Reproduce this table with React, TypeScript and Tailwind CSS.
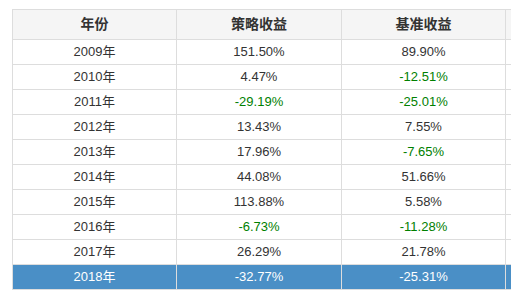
const rows: [string, string, string][] = [
  ['2009年', '151.50%', '89.90%'],
  ['2010年', '4.47%', '-12.51%'],
  ['2011年', '-29.19%', '-25.01%'],
  ['2012年', '13.43%', '7.55%'],
  ['2013年', '17.96%', '-7.65%'],
  ['2014年', '44.08%', '51.66%'],
  ['2015年', '113.88%', '5.58%'],
  ['2016年', '-6.73%', '-11.28%'],
  ['2017年', '26.29%', '21.78%'],
  ['2018年', '-32.77%', '-25.31%'],
];

function Val({ v, hi }: { v: string; hi: boolean }) {
  const neg = v.startsWith('-');
  return <span className={hi ? 'text-white' : neg ? 'text-[#008000]' : 'text-[#333]'}>{v}</span>;
}

export default function App() {
  return (
    <div className="h-[294px] w-[511px] overflow-hidden bg-white pl-3 pt-[9px] font-['Liberation_Sans',Arial,'Noto_Sans_CJK_SC',sans-serif] text-[13px] text-[#333]">
      <table className="w-[600px] table-fixed border-collapse">
        <colgroup>
          <col className="w-[164px]" />
          <col className="w-[165px]" />
          <col className="w-[164px]" />
          <col />
        </colgroup>
        <thead>
          <tr className="h-[30px] bg-[#f5f5f5]">
            <th className="border border-[#ddd] text-center text-[14px] font-bold">年份</th>
            <th className="border border-[#ddd] text-center text-[14px] font-bold">策略收益</th>
            <th className="border border-[#ddd] text-center text-[14px] font-bold">基准收益</th>
            <th className="border border-[#ddd]"></th>
          </tr>
        </thead>
        <tbody>
          {rows.map(([y, a, b], i) => {
            const hi = i === rows.length - 1;
            return (
              <tr key={y} className={hi ? 'h-[25px] bg-[#4a8fc6] text-white' : 'h-[25px]'}>
                <td className="border border-[#ddd] p-0 text-center">{y}</td>
                <td className="border border-[#ddd] p-0 text-center"><Val v={a} hi={hi} /></td>
                <td className="border border-[#ddd] p-0 text-center"><Val v={b} hi={hi} /></td>
                <td className="border border-[#ddd] p-0"></td>
              </tr>
            );
          })}
        </tbody>
      </table>
    </div>
  );
}
